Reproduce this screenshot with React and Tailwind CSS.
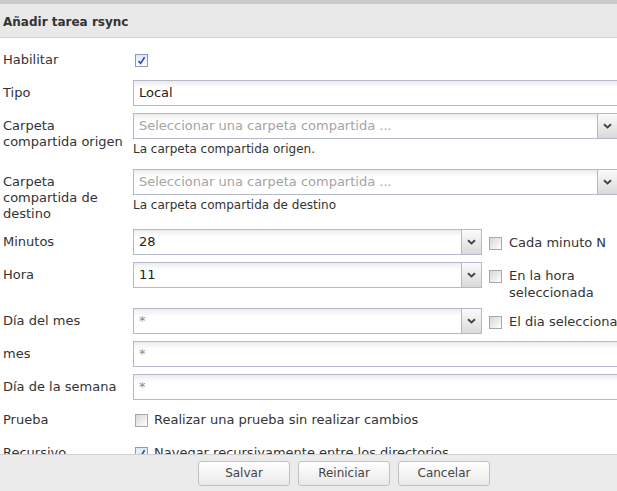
import React from "react";

const Check = ({ checked }) => (
  <span
    className={`w-[13px] h-[13px] shrink-0 border flex items-center justify-center ${
      checked
        ? "border-[#8f9bb5] bg-[linear-gradient(#dfe6f3,#ffffff)]"
        : "border-[#a8a8a8] bg-[linear-gradient(135deg,#d6d6d6,#ffffff)]"
    }`}
  >
    {checked && (
      <svg width="9" height="9" viewBox="0 0 9 9">
        <path d="M1.5 5 L3.6 7.4 L7.6 1.2" fill="none" stroke="#2b4fb8" strokeWidth="1.7" />
      </svg>
    )}
  </span>
);

const Trigger = () => (
  <div className="w-[20px] h-full shrink-0 border-l border-[#b5b8c8] bg-[linear-gradient(#fbfbfb,#dadada)] flex items-center justify-center">
    <svg width="9" height="6" viewBox="0 0 9 6">
      <path d="M1 1.2 L4.5 4.5 L8 1.2" fill="none" stroke="#444" strokeWidth="1.9" />
    </svg>
  </div>
);

const TextBox = ({ value, placeholder, className = "" }) => (
  <div
    className={`h-[26px] border border-[#b5b8c8] bg-[linear-gradient(#ececec,#ffffff_7px)] flex items-center px-[5px] ${className}`}
  >
    {value ? (
      <span className="text-[#222]">{value}</span>
    ) : (
      <span className="text-[#a4a4a4]">{placeholder}</span>
    )}
  </div>
);

const Combo = ({ value, placeholder, className = "" }) => (
  <div className={`h-[26px] border border-[#b5b8c8] flex ${className}`}>
    <div className="flex-1 flex items-center px-[5px] bg-[linear-gradient(#ececec,#ffffff_7px)] overflow-hidden whitespace-nowrap">
      {value ? (
        <span className="text-[#222]">{value}</span>
      ) : (
        <span className="text-[#a4a4a4]">{placeholder}</span>
      )}
    </div>
    <Trigger />
  </div>
);

const Label = ({ children }) => (
  <div className="w-[130px] shrink-0 pt-[5px] leading-[16px] text-[#333]">{children}</div>
);

const Row = ({ label, children }) => (
  <div className="flex mb-[7px]">
    <Label>{label}</Label>
    <div className="flex-1 min-w-0">{children}</div>
  </div>
);

const Hint = ({ children }) => (
  <div className="text-[12px] leading-[15px] pt-[3px] pb-[5px] text-[#333] whitespace-nowrap">{children}</div>
);

const SideCheck = ({ children }) => (
  <div className="flex items-start ml-[7px] w-[150px] shrink-0">
    <div className="mt-[8px]">
      <Check />
    </div>
    <div className="ml-[7px] w-[130px] pt-[5px] leading-[17px] text-[#333]">{children}</div>
  </div>
);

const CheckRow = ({ label, checked, text }) => (
  <div className="flex mb-[7px] h-[26px] items-center">
    <div className="w-[130px] shrink-0 text-[#333]">{label}</div>
    <div className="flex items-center pl-[2px]">
      <Check checked={checked} />
      {text && <span className="ml-[6px] text-[#333] whitespace-nowrap">{text}</span>}
    </div>
  </div>
);

const Star = () => <span className="text-[#888]">*</span>;

const App = () => {
  return (
    <div className="w-[617px] h-[491px] overflow-hidden bg-white font-['DejaVu_Sans',sans-serif] text-[13px]">
      <div className="w-[688px] h-full flex flex-col">
        <div className="h-[4px] bg-[#cbcbcb]" />
        <div className="h-[34px] bg-[#e9e9e9] border-b border-[#d6cfcf] flex items-center pl-[3px] pt-[2px]">
          <span className="font-bold text-[12px] text-[#333]">Añadir tarea rsync</span>
        </div>

        <div className="flex-1 overflow-hidden pl-[3px] pr-[5px] pt-[9px]">
          <CheckRow label="Habilitar" checked />

          <Row label="Tipo">
            <TextBox value="Local" />
          </Row>

          <Row label="Carpeta compartida origen">
            <Combo placeholder="Seleccionar una carpeta compartida ..." className="w-[485px]" />
            <Hint>La carpeta compartida origen.</Hint>
          </Row>

          <Row label="Carpeta compartida de destino">
            <Combo placeholder="Seleccionar una carpeta compartida ..." className="w-[485px]" />
            <Hint>La carpeta compartida de destino</Hint>
          </Row>

          <Row label="Minutos">
            <div className="flex">
              <Combo value="28" className="w-[349px] shrink-0" />
              <SideCheck>Cada minuto N</SideCheck>
            </div>
          </Row>

          <Row label="Hora">
            <div className="flex">
              <Combo value="11" className="w-[349px] shrink-0" />
              <SideCheck>En la hora seleccionada</SideCheck>
            </div>
          </Row>

          <Row label="Día del mes">
            <div className="flex">
              <Combo value={<Star />} className="w-[349px] shrink-0" />
              <SideCheck>
                <span className="whitespace-nowrap">El dia seleccionado</span>
              </SideCheck>
            </div>
          </Row>

          <Row label="mes">
            <TextBox value={<Star />} />
          </Row>

          <Row label="Día de la semana">
            <TextBox value={<Star />} />
          </Row>

          <CheckRow label="Prueba" text="Realizar una prueba sin realizar cambios" />
          <CheckRow label="Recursivo" checked text="Navegar recursivamente entre los directorios" />
        </div>

        <div className="h-[37px] shrink-0 border-t border-[#d0d0d0] bg-[#ebebeb] flex items-center justify-center gap-[8px]">
          {["Salvar", "Reiniciar", "Cancelar"].map((b) => (
            <button
              key={b}
              className="w-[92px] h-[25px] rounded-[3px] border border-[#c2c2c2] bg-[linear-gradient(#ffffff,#e9e9e9)] text-[12px] text-[#444]"
            >
              {b}
            </button>
          ))}
        </div>
      </div>
    </div>
  );
};

export default App;
